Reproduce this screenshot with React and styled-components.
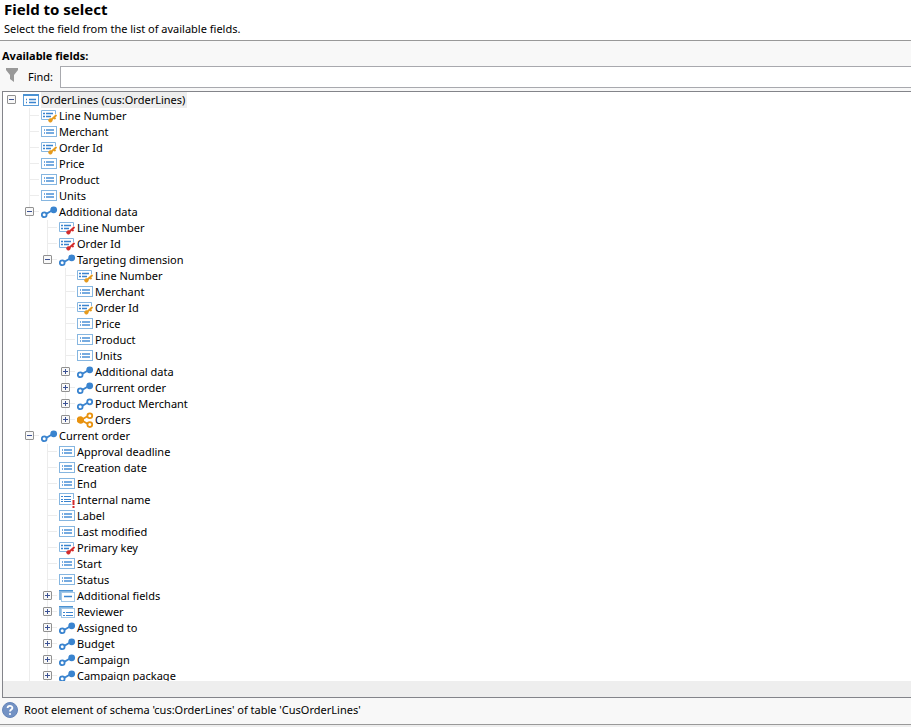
import { useState } from "react";
import styled, { createGlobalStyle } from "styled-components";

const GlobalStyle = createGlobalStyle`
  * {
    box-sizing: border-box;
  }

  body {
    margin: 0;
    background-color: #f8f8f8;
    color: #000;
    font-family: "Noto Sans", "Open Sans", sans-serif;
    font-size: 11px;
    line-height: 16px;
  }
`;

const Container = styled.div`
  display: flex;
  flex-direction: column;
  height: 100vh;
`;

const Header = styled.header`
  padding: 0 4px 3px;
  background-color: #fff;
  border-bottom: 1px solid #999;
`;

const Title = styled.h1`
  margin: 0;
  font-size: 15px;
  font-weight: bold;
  line-height: 18px;
`;

const Desc = styled.p`
  margin: 3px 0 0;
`;

const Main = styled.main`
  flex: 1;
  min-height: 0;
  display: flex;
  flex-direction: column;
  padding: 7px 0 0 2px;
`;

const SectionTitle = styled.h2`
  margin: 0;
  font-size: 11px;
  line-height: 16px;
`;

const SearchBar = styled.div`
  display: flex;
  align-items: center;
  margin: 2px 0 3px;
  padding-left: 3px;
`;

const SearchLabel = styled.label`
  width: 32px;
  margin-left: 9px;
`;

const SearchInput = styled.input`
  flex: 1;
  height: 22px;
  padding: 0 4px;
  border: 1px solid #a8a9ae;
  border-right: none;
  border-radius: 0;
  background-color: #fff;
  font: inherit;
  outline: none;
`;

const TreeBox = styled.div`
  flex: 1;
  min-height: 0;
  display: flex;
  flex-direction: column;
  border: 1px solid #83848a;
  border-right: none;
  background-color: #fff;
`;

const TreeView = styled.div`
  flex: 1;
  min-height: 0;
  overflow: auto;
  scrollbar-width: none;
`;

const ScrollTrack = styled.div`
  flex: none;
  height: 16px;
  background-color: #eee;
`;

const Branch = styled.ul`
  margin: 0;
  padding: 0 0 0 ${(props) => (props.$root ? "0" : "18px")};
  list-style: none;
`;

// the guide line runs the full height of an item, or stops at its own row for the last one
const Item = styled.li`
  background: ${(props) =>
    props.$root
      ? "none"
      : `linear-gradient(#ececec, #ececec) 8px 0 / 1px ${props.$ends ? "8px" : "100%"} no-repeat`};
`;

const Row = styled.div`
  display: flex;
  align-items: center;
  height: 16px;
  white-space: nowrap;
`;

const Gutter = styled.span`
  flex: none;
  display: flex;
  align-items: flex-start;
  width: 20px;
  height: 16px;
  padding: 3px 0 0 4px;
  background: ${(props) =>
    props.$root ? "none" : "linear-gradient(#ececec, #ececec) 8px 7px / 10px 1px no-repeat"};
`;

const Toggle = styled.button`
  display: flex;
  width: 9px;
  height: 9px;
  padding: 0;
  border: none;
  background: none;
`;

const Name = styled.span`
  padding-right: 2px;
  background-color: ${(props) => (props.$selected ? "#eee" : "transparent")};
`;

const StatusBar = styled.footer`
  display: flex;
  align-items: center;
  gap: 6px;
  height: 26px;
  padding: 0 2px 2px;
`;

const BottomEdge = styled.div`
  height: 3px;
  border-top: 1px solid #999;
  background-color: #eee;
`;

const Svg = styled.svg`
  display: block;
  flex: none;
`;

const BLUE = "#3a84cf";
const PALE = "#86b6e0";
const keyColors = { key: "#e59a1c", redkey: "#d32a2a" };

const Icon = ({ type }) => {
  const shared = { width: 18, height: 16, viewBox: "0 0 18 16", fill: "none", "aria-hidden": true };

  if (type === "link" || type === "openlink") {
    return (
      <Svg {...shared}>
        <path d="M5 10L11 6.5" stroke={BLUE} strokeWidth="2" />
        <circle cx="3.2" cy="10.8" r="2.4" stroke={BLUE} strokeWidth="1.8" fill="#fff" />
        <circle cx="12.7" cy="5.8" r="2.5" stroke={BLUE} strokeWidth="1.8" fill={type === "link" ? BLUE : "#fff"} />
      </Svg>
    );
  }
  if (type === "share") {
    return (
      <Svg {...shared} stroke="#e8920f" strokeWidth="1.8">
        <path d="M11 4L4 8L11 12" />
        <circle cx="3.4" cy="8" r="2.8" fill="#e8920f" />
        <circle cx="12.8" cy="3.8" r="2.4" fill="#fff" />
        <circle cx="12.8" cy="12.6" r="2.4" fill="#fff" />
      </Svg>
    );
  }
  if (type === "folder" || type === "folderlist") {
    return (
      <Svg {...shared}>
        <path d="M0 2H14V5H3V12H0Z" fill={PALE} />
        <path d="M0 2H14V3H0Z" fill="#4b92d3" />
        <rect x="2.5" y="4.5" width="13" height="9" fill="#fff" stroke="#a3c8e8" />
        {type === "folder" ? (
          <path d="M5 8.5H13" stroke={BLUE} strokeWidth="1.5" />
        ) : (
          <path d="M4 8.5H6M7 8.5H14M4 11.5H6M7 11.5H14" stroke={BLUE} />
        )}
      </Svg>
    );
  }
  if (type === "table") {
    return (
      <Svg {...shared}>
        <rect x="0.5" y="2.5" width="15" height="11" fill="#fff" stroke="#5c9dd8" />
        <path d="M0 2H16V4H0Z" fill="#4b92d3" />
        <path d="M3 7.5H4M6 7.5H13M3 10.5H4M6 10.5H13" stroke={BLUE} strokeWidth="1.3" />
      </Svg>
    );
  }
  if (type === "required") {
    return (
      <Svg {...shared}>
        <rect x="0.5" y="1.5" width="14" height="11" fill="#fff" stroke={PALE} />
        <path d="M2 4.5H4M5 4.5H12M2 7.5H4M5 7.5H12M2 9.5H4M5 9.5H12" stroke={BLUE} />
        <path d="M14.5 7V16" stroke="#fff" strokeWidth="4" />
        <path d="M14.5 8V13M14.5 14V16" stroke="#d32a2a" strokeWidth="2" />
      </Svg>
    );
  }
  if (keyColors[type]) {
    return (
      <Svg {...shared}>
        <path d="M8 11.5H0.5V2.5H14.5V6" stroke={PALE} />
        <path d="M2 5.5H4M5 5.5H12M2 8.5H4M5 8.5H10" stroke={BLUE} strokeWidth="1.3" />
        <path d="M10 12L15.5 7M12.5 9L14.5 11" stroke={keyColors[type]} strokeWidth="1.8" />
        <circle cx="9.4" cy="12.4" r="1.7" fill={keyColors[type]} stroke={keyColors[type]} />
      </Svg>
    );
  }
  return (
    <Svg {...shared}>
      <rect x="0.5" y="2.5" width="15" height="10" fill="#fff" stroke={PALE} />
      <path d="M3 6H4M5 6H13M3 9H4M5 9H13" stroke="#4a90d6" strokeWidth="1.5" />
    </Svg>
  );
};

const ToggleIcon = ({ open }) => (
  <Svg width="9" height="9" viewBox="0 0 9 9" aria-hidden="true">
    <rect x="0.5" y="0.5" width="8" height="8" rx="0.5" fill="#f8f8f8" stroke="#919191" />
    <path d={open ? "M2 4.5H7" : "M2 4.5H7M4.5 2V7"} stroke="#3c5294" />
  </Svg>
);

const FilterIcon = () => (
  <Svg width="14" height="18" viewBox="0 0 14 18" aria-hidden="true">
    <path d="M1 0H13V2L9 7V14L5 11V7L1 2Z" fill="#999" />
  </Svg>
);

const HelpIcon = () => (
  <Svg width="16" height="16" viewBox="0 0 16 16" aria-hidden="true">
    <circle cx="8" cy="8" r="7.5" fill="#7392c4" stroke="#6484b8" />
    <path d="M5.6 6C5.6 3.2 10.4 3.2 10.4 6C10.4 7.6 8 7.6 8 9.6" fill="none" stroke="#fff" strokeWidth="1.8" />
    <circle cx="8" cy="12" r="1.1" fill="#fff" />
  </Svg>
);

const field = (name, icon = "field") => ({ name, icon });
const closed = (name, icon = "link") => ({ name, icon, children: [] });

const orderLineFields = [
  field("Line Number", "key"),
  field("Merchant"),
  field("Order Id", "key"),
  field("Price"),
  field("Product"),
  field("Units"),
];

// partial: only the first children are loaded, so the guide line carries on
const schema = {
  name: "OrderLines (cus:OrderLines)",
  icon: "table",
  open: true,
  partial: true,
  children: [
    ...orderLineFields,
    {
      name: "Additional data",
      icon: "link",
      open: true,
      children: [
        field("Line Number", "redkey"),
        field("Order Id", "redkey"),
        {
          name: "Targeting dimension",
          icon: "link",
          open: true,
          children: [
            ...orderLineFields,
            closed("Additional data"),
            closed("Current order"),
            closed("Product Merchant", "openlink"),
            closed("Orders", "share"),
          ],
        },
      ],
    },
    {
      name: "Current order",
      icon: "link",
      open: true,
      partial: true,
      children: [
        field("Approval deadline"),
        field("Creation date"),
        field("End"),
        field("Internal name", "required"),
        field("Label"),
        field("Last modified"),
        field("Primary key", "redkey"),
        field("Start"),
        field("Status"),
        closed("Additional fields", "folder"),
        closed("Reviewer", "folderlist"),
        closed("Assigned to"),
        closed("Budget"),
        closed("Campaign"),
        closed("Campaign package"),
      ],
    },
  ],
};

const TreeNode = ({ node, root, ends }) => {
  const [open, setOpen] = useState(Boolean(node.open));

  return (
    <Item $root={root} $ends={ends} role="treeitem" aria-expanded={node.children ? open : undefined}>
      <Row>
        <Gutter $root={root}>
          {node.children && (
            <Toggle
              type="button"
              aria-label={`${open ? "Collapse" : "Expand"} ${node.name}`}
              onClick={() => setOpen(!open)}
            >
              <ToggleIcon open={open} />
            </Toggle>
          )}
        </Gutter>
        <Icon type={node.icon} />
        <Name $selected={root}>{node.name}</Name>
      </Row>
      {open && node.children.length > 0 && (
        <Branch role="group">
          {node.children.map((child, i) => (
            <TreeNode key={child.name} node={child} ends={!node.partial && i === node.children.length - 1} />
          ))}
        </Branch>
      )}
    </Item>
  );
};

const App = () => {
  const [search, setSearch] = useState("");

  return (
    <>
      <GlobalStyle />
      <Container>
        <Header>
          <Title>Field to select</Title>
          <Desc>Select the field from the list of available fields.</Desc>
        </Header>

        <Main>
          <SectionTitle>Available fields:</SectionTitle>
          <SearchBar>
            <FilterIcon />
            <SearchLabel htmlFor="find">Find:</SearchLabel>
            <SearchInput id="find" value={search} onChange={(e) => setSearch(e.target.value)} />
          </SearchBar>
          <TreeBox>
            <TreeView>
              <Branch $root role="tree" aria-label="Available fields">
                <TreeNode node={schema} root />
              </Branch>
            </TreeView>
            <ScrollTrack />
          </TreeBox>
        </Main>

        <StatusBar>
          <HelpIcon />
          <span>Root element of schema 'cus:OrderLines' of table 'CusOrderLines'</span>
        </StatusBar>
        <BottomEdge />
      </Container>
    </>
  );
};

export default App;
